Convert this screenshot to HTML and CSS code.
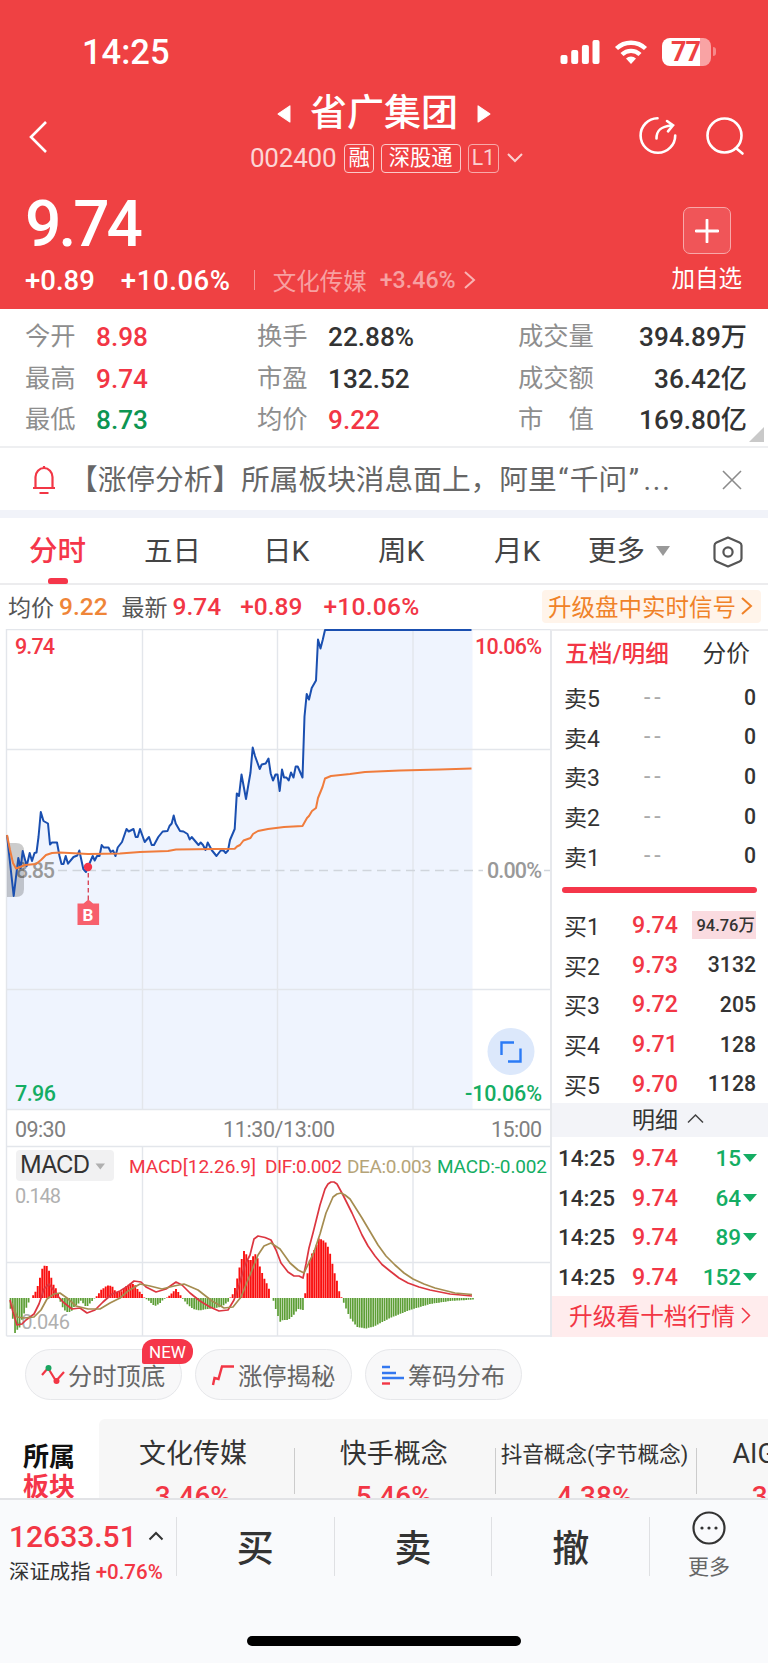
FILE: index.html
```html
<!DOCTYPE html>
<html lang="zh-CN">
<head>
  <meta charset="UTF-8">
  <meta name="viewport" content="width=device-width, initial-scale=1.0">
  <title>省广集团 002400</title>
  <link rel="stylesheet" href="styles.css">
</head>
<body>
<div class="page">

  <header class="header">
    <div class="status-bar">
      <span class="time num">14:25</span>
      <div class="status-icons">
        <svg width="40" height="26" viewBox="0 0 40 26" fill="#fff">
          <rect x="0.500" y="16" width="7" height="9" rx="2"/>
          <rect x="11.200" y="11" width="7" height="14" rx="2"/>
          <rect x="21.900" y="6" width="7" height="19" rx="2"/>
          <rect x="32.500" y="1" width="7" height="24" rx="2"/>
        </svg>
        <svg class="wifi" width="34" height="26" viewBox="0 0 34 26">
          <path d="M2.500 9.500a21 21 0 0 1 29 0M8 15.500a13 13 0 0 1 18 0" fill="none" stroke="#fff" stroke-width="4.400"/>
          <path d="M17 25l-5-5.500a7.500 7.500 0 0 1 10 0z" fill="#fff"/>
        </svg>
        <div class="battery"><span class="num">77</span></div>
        <i class="battery-tip"></i>
      </div>
    </div>

    <div class="nav">
      <svg class="back" width="22" height="36" viewBox="0 0 22 36"><path d="M18 3L3 18l15 15" fill="none" stroke="#fff" stroke-width="2.600"/></svg>
      <div class="nav-center">
        <div class="stock-name">
          <svg width="14" height="20" viewBox="0 0 13 18"><path d="M12 1.500v15L1 9z" fill="#fff" stroke="#fff" stroke-linejoin="round"/></svg>
          <h1>省广集团</h1>
          <svg width="14" height="20" viewBox="0 0 13 18"><path d="M1 1.500v15L12 9z" fill="#fff" stroke="#fff" stroke-linejoin="round"/></svg>
        </div>
        <div class="stock-code">
          <span class="code num">002400</span>
          <span class="tag">融</span>
          <span class="tag tag-wide">深股通</span>
          <span class="tag tag-dim">L1</span>
          <svg width="18" height="12" viewBox="0 0 18 12"><path d="M2 2l7 7 7-7" fill="none" stroke="#fbd0d0" stroke-width="2"/></svg>
        </div>
      </div>
      <div class="nav-icons">
        <svg width="40" height="40" viewBox="0 0 40 40" fill="none" stroke="#fff" stroke-width="2.600" stroke-linecap="round">
          <path d="M19.500 2.200A17.300 17.300 0 1 0 37.200 19.500"/>
          <path d="M18.500 22.500c0-8 4-12 15-13M29 5l6 4.300-5 6"/>
        </svg>
        <svg width="40" height="40" viewBox="0 0 40 40" fill="none" stroke="#fff" stroke-width="2.600" stroke-linecap="round">
          <circle cx="19.500" cy="19.500" r="17"/><path d="M31.500 32.500l6 5"/>
        </svg>
      </div>
    </div>

    <div class="price-area">
      <div>
        <div class="price num">9.74</div>
        <div class="change">
          <span class="num">+0.89</span>
          <span class="num pct">+10.06%</span>
          <i class="bar"></i>
          <span class="sector-name">文化传媒</span>
          <span class="num sector-pct">+3.46%</span>
          <svg width="12" height="18" viewBox="0 0 12 18"><path d="M1 1l9 8-9 8" fill="none" stroke="#f9b3b3" stroke-width="2"/></svg>
        </div>
      </div>
      <div class="add">
        <div class="add-box"><svg width="24" height="24" viewBox="0 0 24 24"><path d="M12 1v22M1 12h22" stroke="#fff" stroke-width="2.800" stroke-linecap="round"/></svg></div>
        <span>加自选</span>
      </div>
    </div>
  </header>

  <section class="quote">
    <span class="label">今开</span><span class="num red">8.98</span><span class="label">换手</span><span class="num">22.88%</span><span class="label">成交量</span><span class="num end">394.89万</span>
    <span class="label">最高</span><span class="num red">9.74</span><span class="label">市盈</span><span class="num">132.52</span><span class="label">成交额</span><span class="num end">36.42亿</span>
    <span class="label">最低</span><span class="num dark-green">8.73</span><span class="label">均价</span><span class="num red">9.22</span><span class="label">市　值</span><span class="num end">169.80亿</span>
    <i class="corner"></i>
  </section>

  <section class="news">
    <svg width="24" height="30" viewBox="0 0 24 30" fill="none" stroke="#f23645" stroke-width="2.200">
      <path d="M1 23h22M3.500 23V12a8.500 9 0 0 1 17 0v11M12 4V1M7.500 28h9"/>
    </svg>
    <p>【涨停分析】所属板块消息面上，阿里<span class="quote-mark">“</span>千问<span class="quote-mark">”</span><span class="dots">...</span></p>
    <svg class="close" width="20" height="20" viewBox="0 0 20 20"><path d="M1 1l18 18M19 1L1 19" stroke="#8b8b8b" stroke-width="1.600"/></svg>
  </section>

  <nav class="tabs">
    <span class="tab active">分时</span>
    <span class="tab">五日</span>
    <span class="tab">日K</span>
    <span class="tab">周K</span>
    <span class="tab">月K</span>
    <span class="tab more">更多<i></i></span>
    <svg width="32" height="34" viewBox="0 0 32 34" fill="none" stroke="#555" stroke-width="2.200" stroke-linejoin="round">
      <path d="M16 2.500l11.500 5q2 1 2 3v13q0 2-2 3L16 31.500l-11.500-5q-2-1-2-3v-13q0-2 2-3z"/><circle cx="16" cy="17" r="4.600"/>
    </svg>
  </nav>

  <div class="info">
    <span>均价</span><b class="num orange">9.22</b>
    <span class="latest">最新</span><b class="num red">9.74</b>
    <b class="num red chg">+0.89</b><b class="num red chg">+10.06%</b>
    <span class="upgrade">升级盘中实时信号<svg width="12" height="18" viewBox="0 0 12 18"><path d="M1 1l9 8-9 8" fill="none" stroke="#f08228" stroke-width="2"/></svg></span>
  </div>

  <main class="main">
    <svg class="chart" width="550" height="708" viewBox="0 629 550 708">
      <path id="area" fill="#eff4fe"/>
      <g stroke="#e3e6eb" stroke-width="1.400" fill="none">
        <path d="M6.500 629.500H550M6.500 749.500H550M6.500 989.500H550M6.500 1109.500H550M6.500 1146.500H550M6.500 1262.500H550M6.500 1336H550"/>
        <path d="M6.500 629V1336M142.500 629V1109M277.500 629V1109M413 629V1109M142.500 1146V1336M277.500 1146V1336M413 1146V1336"/>
      </g>
      <path d="M58 870.500H483M544 870.500h6" stroke="#d0d5dc" stroke-width="1.500" stroke-dasharray="9 5.500"/>
      <text x="16" y="878" class="ax gray" textLength="39">8.85</text>
      <path d="M7 843h9q8 0 8 8v38q0 8-8 8H7z" fill="#000" fill-opacity=".2"/>
      <polyline id="price" fill="none" stroke="#1a4fb0" stroke-width="2" stroke-linejoin="round"/>
      <polyline id="average" fill="none" stroke="#f07c3c" stroke-width="2" stroke-linejoin="round"/>
      <circle cx="88" cy="867" r="4.200" fill="#f5364a"/>
      <path d="M88.300 873v27" stroke="#d8485a" stroke-width="1.400" stroke-dasharray="4.500 3"/>
      <path d="M77.500 903.500h6l4.800-4 4.800 4h6v21.500H77.500z" fill="#f7606d"/>
      <text x="82.500" y="920.500" class="mark">B</text>
      <text x="15" y="654" class="ax red" textLength="40">9.74</text>
      <text x="475" y="654" class="ax red" textLength="67">10.06%</text>
      <text x="487" y="878" class="ax gray" textLength="55">0.00%</text>
      <text x="15" y="1101" class="ax green" textLength="41">7.96</text>
      <text x="465" y="1101" class="ax green" textLength="77">-10.06%</text>
      <text x="15" y="1136.500" class="ax dim" textLength="51">09:30</text>
      <text x="223" y="1136.500" class="ax dim" textLength="112">11:30/13:00</text>
      <text x="491" y="1136.500" class="ax dim" textLength="51">15:00</text>
      <circle cx="511" cy="1051.500" r="23.500" fill="#dce8fb"/>
      <path d="M514 1042.500h-12.500v12.500M508 1061.500h12.500v-13" fill="none" stroke="#2b7bf6" stroke-width="2.400"/>

      <rect x="16" y="1150" width="98" height="31" rx="4" fill="#f1f1f2"/>
      <text x="20" y="1173" class="macd-btn" textLength="70">MACD</text>
      <path d="M95.500 1163.500h9.500l-4.700 6z" fill="#b0b0b0"/>
      <text x="129" y="1172.500" class="legend red" textLength="127">MACD[12.26.9]</text>
      <text x="265" y="1172.500" class="legend red" textLength="77">DIF:0.002</text>
      <text x="347" y="1172.500" class="legend tan" textLength="85">DEA:0.003</text>
      <text x="437" y="1172.500" class="legend green" textLength="110">MACD:-0.002</text>
      <text x="15" y="1202.500" class="axs" textLength="46">0.148</text>
      <text x="16" y="1328.500" class="axs" textLength="54">-0.046</text>
      <path id="barsUp" stroke="#fa0f0f" stroke-width="1.900"/>
      <path id="barsDown" stroke="#5c9e35" stroke-width="1.700"/>
      <polyline id="dif" fill="none" stroke="#dc3640" stroke-width="1.700" stroke-linejoin="round"/>
      <polyline id="dea" fill="none" stroke="#a58c50" stroke-width="1.700" stroke-linejoin="round"/>
    </svg>

    <aside class="depth">
      <div class="depth-tabs"><b>五档/明细</b><span>分价</span></div>
      <div class="level"><span>卖5</span><em>--</em><span class="num">0</span></div>
      <div class="level"><span>卖4</span><em>--</em><span class="num">0</span></div>
      <div class="level"><span>卖3</span><em>--</em><span class="num">0</span></div>
      <div class="level"><span>卖2</span><em>--</em><span class="num">0</span></div>
      <div class="level"><span>卖1</span><em>--</em><span class="num">0</span></div>
      <div class="ratio"></div>
      <div class="level"><span>买1</span><b class="num">9.74</b><span class="num hot">94.76万</span></div>
      <div class="level"><span>买2</span><b class="num">9.73</b><span class="num">3132</span></div>
      <div class="level"><span>买3</span><b class="num">9.72</b><span class="num">205</span></div>
      <div class="level"><span>买4</span><b class="num">9.71</b><span class="num">128</span></div>
      <div class="level"><span>买5</span><b class="num">9.70</b><span class="num">1128</span></div>
      <div class="detail-head">明细<svg width="17" height="11" viewBox="0 0 17 11"><path d="M1 9.500l7.500-7.500L16 9.500" fill="none" stroke="#444" stroke-width="1.500"/></svg></div>
      <div class="tick"><span class="num">14:25</span><b class="num">9.74</b><span class="num vol">15<i></i></span></div>
      <div class="tick"><span class="num">14:25</span><b class="num">9.74</b><span class="num vol">64<i></i></span></div>
      <div class="tick"><span class="num">14:25</span><b class="num">9.74</b><span class="num vol">89<i></i></span></div>
      <div class="tick"><span class="num">14:25</span><b class="num">9.74</b><span class="num vol">152<i></i></span></div>
      <div class="ten-levels">升级看十档行情<svg width="10" height="17" viewBox="0 0 10 17"><path d="M1 1l7.500 7.500L1 16" fill="none" stroke="#f23645" stroke-width="1.500"/></svg></div>
    </aside>
  </main>

  <div class="chips">
    <div class="chip">
      <svg width="24" height="22" viewBox="0 0 24 22" fill="none" stroke="#f23645" stroke-width="2.200"><path d="M1 11l6-7 8 13 8-9"/><circle cx="7.500" cy="4" r="3" fill="#1ba560" stroke="none"/><circle cx="15.500" cy="17" r="3" fill="#f23645" stroke="none"/></svg>
      分时顶底
      <span class="new">NEW</span>
    </div>
    <div class="chip">
      <svg width="24" height="22" viewBox="0 0 24 22" fill="none" stroke="#f23645" stroke-width="2.400"><path d="M2 21l1.500-7 4 1L11 2.500h12"/></svg>
      涨停揭秘
    </div>
    <div class="chip">
      <svg width="24" height="22" viewBox="0 0 24 22" fill="none" stroke="#3478f0" stroke-width="2.400"><path d="M1 3h8M1 9h14M1 14h22"/><path d="M1 19.500h8" stroke="#f23645"/></svg>
      筹码分布
    </div>
  </div>

  <section class="sectors">
    <div class="sectors-title"><span>所属</span><span class="red">板块</span></div>
    <div class="sectors-list">
      <div class="sector"><span>文化传媒</span><b class="num">3.46%</b></div>
      <div class="sector"><span>快手概念</span><b class="num">5.46%</b></div>
      <div class="sector long"><span>抖音概念(字节概念)</span><b class="num">4.38%</b></div>
      <div class="sector last"><span>AIGC概念</span><b class="num">3.18%</b></div>
    </div>
  </section>

  <footer class="bottom">
    <div class="actions">
      <div class="index">
        <div class="index-value"><b class="num">12633.51</b><svg width="16" height="10" viewBox="0 0 16 10"><path d="M1.500 8.500L8 2l6.500 6.500" fill="none" stroke="#333" stroke-width="2"/></svg></div>
        <div class="index-name">深证成指 <span class="num red">+0.76%</span></div>
      </div>
      <div class="action">买</div>
      <div class="action">卖</div>
      <div class="action">撤</div>
      <div class="action-more">
        <svg width="36" height="36" viewBox="0 0 36 36"><circle cx="18" cy="18" r="15.500" fill="none" stroke="#333" stroke-width="2.200"/><g fill="#333"><circle cx="11" cy="18" r="1.600"/><circle cx="18" cy="18" r="1.600"/><circle cx="25" cy="18" r="1.600"/></g></svg>
        <span>更多</span>
      </div>
    </div>
    <div class="home-bar"></div>
  </footer>
</div>

<script src="chart.js"></script>
</body>
</html>
```
FILE: chart.js
```js
const price = [
  [7,835],[13.7,896],[18.3,858],[20.7,868],[22.7,851],[26.7,866],[29.7,853],[32,861],[34.5,853],[36.5,852.5],
  [38.5,837],[40.8,812],[43.5,821],[48,823.5],[50,844.5],[52,842.5],[57,842.5],[59.5,856],[61.5,864],[63.5,864],
  [65.7,856],[68,863.7],[73.5,857],[77.3,855.5],[79.3,850.5],[83.3,869],[86,872],[88,867],[92.7,856],[94.7,860.5],
  [97,856],[99.5,856],[101.7,845],[103.7,847.5],[108.5,847.5],[110.7,852],[113,850.5],[115.5,856],[117.7,847.5],
  [122,842],[126.5,829],[128.7,831.5],[133.5,829],[135.7,837],[137.7,837],[140,829],[144.7,842],[149,837],
  [151.7,845],[154,845],[158.3,837],[162.7,831.5],[167.5,831],[169.5,826],[171.7,823.5],[173.7,815.5],[175.7,823.5],
  [180,831],[183.5,831.5],[187.5,834],[189.7,839.5],[191.7,837],[198.5,845],[200.7,842.5],[203,845],[205.5,850],
  [207.7,842.5],[212,850.5],[216.5,856],[220.7,850.5],[223.5,850.5],[225.7,853],[228,850.5],[230,840],[234.7,829],
  [236.8,793.5],[239,796],[241.5,774.5],[246,799],[248.5,784],[250.5,772.5],[252.7,747.5],[255,756],[259.7,769],
  [261.7,764.5],[265.7,763.5],[268.5,758.5],[270.7,773.5],[273,780.5],[275.5,774.5],[277.5,774.5],[279.7,791],
  [282,769.5],[284,777.5],[286.5,777.5],[288.7,780.5],[291,772.5],[293.5,777.5],[295.7,766.5],[297.7,766.5],
  [302.5,777.5],[304.5,716.5],[306.7,694],[309,699.5],[311.7,688],[316,680.5],[318,639.5],[320.5,648.5],
  [322.7,640],[325,630],[471.5,630]
];

const average = [
  [7,835],[10,850],[13,863],[16,868.5],[20,867],[25,865],[36,864],[41,860],[46,855],[52,853],[60,852.5],[88,854],
  [120,853.5],[140,852],[168,851],[176,849.5],[234.7,848.7],[237,846.5],[240,845],[243.5,840.5],[250.5,838],
  [253,834],[258,831],[268,829],[284,827],[302.5,826],[307,818],[309,816],[312,811],[316,808],[318,798],
  [322.5,787],[325,778.5],[331,776],[350,774],[365,772],[400,770.5],[440,769.5],[471.5,768.5]
];

// bar heights, positive above the zero line
const macd = [
  [10,-9],[12,-16],[15,-35],[17,-32],[20,-29],[22,-21],[25,-13],[28,-6],[30,-1],[32,1],[36,7],[39,16],[42,29],
  [45,33],[47,32],[50,25],[53,14],[57,8],[59,2],[60,-3],[63,-10],[66,-14],[71,-14],[74,-9],[78,-6],[81,-2.5],
  [85,-8],[88,-8],[91,-4],[94,-1],[97,2],[101,8],[107,12.5],[112,12],[116,6],[121,6],[125,11],[131,15],[135,13],
  [138,8],[143,3],[144.5,0],[148,-2],[153,-7],[156,-8],[160,-5],[164,-1],[168,1],[172,5],[176,9],[179,5],
  [183,-1],[188,-7],[193,-11],[200,-12.5],[207,-11],[215,-10],[221,-9],[228,-4],[230,0],[232,2],[236,13],
  [239,29],[241,35],[243,46],[245,48],[248,38],[252,38],[254,45],[257,42],[260,31],[264,20],[268,12],[270,6],
  [271,0],[273,-1],[276,-12],[280,-24],[283,-22],[288,-22],[293,-18],[298,-11],[303,-12],[304.5,0],[306,10],
  [308,30],[311,43],[315,49],[319,60],[324,57],[327,54],[330,45],[334,27],[337,17],[340,3],[342,0],[345,-8],
  [350,-20],[357,-29],[366,-30.5],[374,-28.5],[390,-20],[410,-12],[430,-6],[450,-3],[474,-1.5]
];

const dif = [
  [10,1300],[13,1312],[17,1325],[22,1324],[26,1320],[34,1314],[39,1304],[44,1289],[49,1284],[52,1288],[57,1295],
  [63,1302],[72,1309],[80,1308],[87,1313],[95,1310],[103,1302],[112,1294],[120,1291],[128,1286],[134,1281],
  [141,1282],[146,1287],[156,1292],[166,1289],[176,1282],[182,1285],[190,1293],[200,1301],[210,1307],[219,1311],
  [228,1310],[234,1300],[239,1285],[245,1265],[250,1255],[254,1239],[258,1236],[265,1237.5],[271,1240],
  [276,1250],[281,1263],[288,1272],[294,1276],[299,1276],[303,1278],[306,1264],[309,1248],[313,1233],[317,1217],
  [320,1205],[325,1189],[328,1184],[331,1182],[334,1182],[337,1184],[343,1195],[352,1213],[362,1235],[368,1246],
  [375,1256],[382,1264.5],[390,1271],[399,1278],[408,1283],[419,1287],[430,1290],[450,1294],[472,1296]
];

const dea = [
  [12,1303],[17,1317],[24,1318],[34,1317],[41,1310],[47,1299],[54,1294],[60,1293],[67,1298],[76,1306],[88,1309],
  [100,1309],[110,1303],[120,1298],[128,1291],[140,1284],[150,1286],[162,1289],[174,1286],[184,1284],[198,1290],
  [212,1301],[224,1308],[233,1307],[241,1297],[250,1275],[258,1255],[264,1246],[271,1243],[280,1249],[290,1263],
  [298,1270],[304,1273],[314,1252],[320,1234],[326,1213],[333,1197],[337,1194],[341,1193],[345,1195],[350,1199],
  [362,1218],[378,1245],[386,1256],[395,1265],[404,1273],[413,1279],[424,1284],[435,1288],[455,1293],[472,1294.5]
];

function setLine(id, points) {
  document.getElementById(id).setAttribute('points', points.join(' '));
}

function valueAt(points, x) {
  for (let i = 1; i < points.length; i++) {
    const [x0, y0] = points[i - 1];
    const [x1, y1] = points[i];
    if (x <= x1) return y0 + (y1 - y0) * (x - x0) / (x1 - x0);
  }
  return 0;
}

setLine('price', price);
setLine('average', average);
setLine('dif', dif);
setLine('dea', dea);
document.getElementById('area').setAttribute('d', 'M7 1109L' + price.join(' ') + ' 472.500 630 472.500 1109z');

let up = '';
let down = '';
for (let x = 10.5; x < 474; x += 2.267) {
  const h = valueAt(macd, x);
  if (h > 0) up += `M${x} 1298v${-h}`;
  else down += `M${x} 1298v${-h}`;
}
document.getElementById('barsUp').setAttribute('d', up);
document.getElementById('barsDown').setAttribute('d', down);
```
FILE: styles.css
```css
* {
  box-sizing: border-box;
}
body {
  margin: 0;
  background: #fff;
  color: #333;
  font-family: Roboto, "Noto Sans CJK SC", sans-serif;
}
svg {
  flex: none;
  display: block;
}
i, em {
  font-style: normal;
}
.page {
  width: 768px;
  height: 1663px;
  display: flex;
  flex-direction: column;
  overflow: hidden;
}
.num {
  font-family: Roboto, "Noto Sans CJK SC", sans-serif;
  font-weight: 500;
}
.red { color: #f23645; fill: #f23645; }
.green { color: #14ad63; fill: #14ad63; }
.dark-green { color: #0d9552; }
.orange { color: #ef8538; }

/* header */
.header {
  height: 309px;
  background: #ef4143;
  color: #fff;
}
.status-bar {
  height: 84px;
  padding: 19px 52px 0 82px;
  display: flex;
  align-items: center;
  justify-content: space-between;
}
.time {
  font-size: 34.500px;
}
.status-icons {
  display: flex;
  align-items: center;
}
.wifi {
  margin: 0 14px;
}
.battery {
  width: 49px;
  height: 28px;
  border-radius: 8px;
  background: linear-gradient(90deg, #fff 77%, #f9a3a4 77%);
  color: #ef4143;
  font-size: 27px;
  line-height: 28px;
  padding-left: 9px;
}
.battery .num {
  font-weight: 700;
  letter-spacing: -1px;
}
.battery-tip {
  width: 3px;
  height: 9px;
  margin-left: 2px;
  border-radius: 0 3px 3px 0;
  background: #f6898a;
}
.nav {
  height: 102px;
  padding: 0 23px 0 28px;
  display: flex;
  justify-content: space-between;
}
.back {
  margin: 35px 86px 0 0;
}
.nav-center {
  display: flex;
  flex-direction: column;
  align-items: center;
}
.stock-name {
  height: 56px;
  margin-right: 6px;
  padding-top: 3px;
  display: flex;
  align-items: center;
  gap: 19px;
}
.stock-name h1 {
  margin: 0;
  font-size: 37px;
  line-height: 56px;
  font-weight: 500;
}
.stock-code {
  display: flex;
  align-items: center;
  gap: 7px;
  margin-top: 3px;
}
.code {
  font-size: 26px;
  font-weight: 400;
  letter-spacing: -.200px;
  color: #fcd5d5;
  margin-right: 1px;
}
.tag {
  height: 29px;
  padding: 0 3px;
  border: 1.500px solid #fbc9c9;
  border-radius: 4px;
  font-size: 21.300px;
  line-height: 26px;
}
.tag-wide {
  padding: 0 7px;
}
.tag-dim {
  color: #fbd0d0;
  border-color: #f8aaaa;
  padding: 0 3px;
}
.nav-icons {
  display: flex;
  gap: 27px;
  padding-top: 32px;
}
.price-area {
  padding: 0 26px 0 25px;
  display: flex;
  justify-content: space-between;
}
.price {
  margin-top: 2px;
  height: 75px;
  font-size: 64px;
  line-height: 74px;
  letter-spacing: -3px;
}
.change {
  height: 34px;
  display: flex;
  align-items: center;
  font-size: 27.500px;
}
.change .pct {
  margin-left: 26px;
  letter-spacing: .600px;
}
.change .bar {
  width: 1px;
  height: 20px;
  background: #f59495;
  margin: 0 18px 0 23px;
}
.sector-name {
  color: #f7a0a1;
  font-size: 23.500px;
}
.change .sector-pct {
  color: #f7a0a1;
  font-size: 23.200px;
  margin: 0 8px 0 13px;
}
.add {
  display: flex;
  flex-direction: column;
  align-items: center;
  font-size: 23.500px;
  line-height: 30px;
}
.add-box {
  width: 48px;
  height: 47px;
  margin: 21px 0 10px;
  border: 1.500px solid #f8a8a9;
  border-radius: 7px;
  background: #f05558;
  display: flex;
  align-items: center;
  justify-content: center;
}

/* quote */
.quote {
  position: relative;
  height: 139px;
  padding: 8px 21px 0 25px;
  border-bottom: 2px solid #eeeff1;
  display: grid;
  grid-template-columns: 71px 161px 71px 190px 78px 1fr;
  grid-template-rows: repeat(3, 41.500px);
  line-height: 41.500px;
  font-size: 26.200px;
}
.quote .label {
  color: #8e8e8e;
  font-size: 25.300px;
  line-height: 40px;
}
.end {
  text-align: right;
}
.corner {
  position: absolute;
  right: 4px;
  bottom: 4px;
  border-left: 15px solid transparent;
  border-bottom: 15px solid #c9c9c9;
}

/* news */
.news {
  height: 70px;
  padding: 2px 26px 0 32px;
  border-bottom: 8px solid #f1f3f9;
  display: flex;
  align-items: center;
  color: #666;
}
.news p {
  margin: 0 0 0 13px;
  flex: 1;
  font-size: 28.700px;
  line-height: 40px;
  white-space: nowrap;
}
.quote-mark {
  margin: 0 1.500px;
}
.dots {
  margin-left: 3px;
  letter-spacing: 1.800px;
}

/* tabs */
.tabs {
  height: 67px;
  padding: 0 24px 0 29px;
  border-bottom: 2px solid #ececee;
  display: grid;
  grid-template-columns: 115px 119px 115px 116px 94px 1fr 32px;
  align-items: center;
  font-size: 28.500px;
  line-height: 67px;
  color: #444;
}
.active {
  position: relative;
  color: #f5364a;
  font-weight: 500;
}
.active::after {
  content: "";
  position: absolute;
  left: 19px;
  bottom: 1px;
  width: 20px;
  height: 6px;
  border-radius: 3px 3px 2px 2px;
  background: #f5364a;
}
.more i {
  display: inline-block;
  margin-left: 11px;
  border: 7.500px solid transparent;
  border-top: 10px solid #999;
  border-bottom: 0;
  vertical-align: 5px;
}

/* price info */
.info {
  height: 44px;
  padding: 0 7px 2px 8px;
  display: flex;
  align-items: center;
  font-size: 23px;
  color: #555;
}
.info .num {
  font-size: 24.500px;
  margin-left: 5px;
}
.info .latest {
  margin-left: 14px;
}
.info .chg {
  margin-left: 19px;
}
.info .chg + .chg {
  margin-left: 21px;
  letter-spacing: .300px;
}
.upgrade {
  margin-left: auto;
  height: 33px;
  padding: 0 8px 0 6px;
  background: #fff4ea;
  border-radius: 4px;
  color: #f08228;
  font-size: 23.500px;
  display: flex;
  align-items: center;
  gap: 5px;
}

/* chart */
.main {
  display: flex;
  height: 708px;
}
.chart text {
  font-family: Roboto, sans-serif;
}
.ax {
  font-size: 21.500px;
  font-weight: 500;
}
.ax.gray {
  fill: #999;
}
.ax.dim {
  fill: #808080;
  font-weight: 400;
}
.axs {
  font-size: 20px;
  fill: #b0b0b0;
}
.chart .mark {
  font-size: 17px;
  font-weight: 700;
  fill: #fff;
}
.chart .macd-btn {
  font-family: Inter, sans-serif;
  font-size: 24px;
  fill: #333;
}
.legend {
  font-size: 19px;
}
.tan {
  fill: #b5a478;
}

/* depth */
.depth {
  flex: 1;
  border-left: 2px solid #e6e8ec;
  border-top: 2px solid #ececee;
}
.depth-tabs {
  height: 46.500px;
  padding: 0 18px 4px 13px;
  display: flex;
  justify-content: space-between;
  align-items: center;
  font-size: 23.700px;
}
.depth-tabs b {
  color: #f23645;
  font-weight: 500;
}
.level, .tick {
  height: 39.600px;
  padding: 0 12px 0 12px;
  display: grid;
  grid-template-columns: 68px 60px 1fr;
  align-items: center;
  font-size: 23px;
}
.level em {
  color: #aaa;
  padding-left: 12px;
  letter-spacing: 4px;
}
.level b, .tick b {
  color: #f23645;
  font-size: 23.200px;
}
.level .num:last-child {
  text-align: right;
  font-size: 21.200px;
}
.level .num.hot:last-child {
  justify-self: end;
  font-size: 16.500px;
  width: 64px;
  height: 28px;
  line-height: 29px;
  padding-right: 1px;
  background: #fadbe0;
  white-space: nowrap;
}
.ratio {
  margin: 11.500px 11px 12.500px 10px;
  height: 6px;
  border-radius: 3px;
  background: #f5364a;
}
.detail-head {
  height: 34px;
  margin-bottom: 1px;
  padding: 0 0 4px 16px;
  background: #f3f4f8;
  display: flex;
  align-items: center;
  justify-content: center;
  gap: 9px;
  font-size: 23px;
}
.tick {
  grid-template-columns: 74px 60px 1fr;
  padding: 0 11px 0 6px;
  font-size: 22.500px;
}
.tick .vol {
  color: #14ad63;
  display: flex;
  justify-content: flex-end;
  align-items: center;
}
.vol i {
  margin-left: 2px;
  border: 7px solid transparent;
  border-top: 8px solid #14ad63;
  border-bottom: 0;
}
.ten-levels {
  height: 41px;
  margin-top: -1px;
  padding-bottom: 2px;
  background: #ffeced;
  color: #f23645;
  font-size: 23.700px;
  display: flex;
  align-items: center;
  justify-content: center;
  gap: 6px;
}

/* chips */
.chips {
  height: 82px;
  padding: 12px 25px 0;
  display: flex;
  gap: 13px;
}
.chip {
  position: relative;
  width: 157px;
  height: 51px;
  padding-left: 15px;
  border: 1px solid #e6e7ea;
  border-radius: 26px;
  background: #f8f8f9;
  display: flex;
  align-items: center;
  gap: 3px;
  font-size: 24.300px;
  color: #666;
  white-space: nowrap;
}
.new {
  position: absolute;
  left: 116px;
  top: -11px;
  width: 51px;
  height: 25px;
  border-radius: 12px 12px 12px 2px;
  background: #f5364a;
  color: #fff;
  font-size: 17px;
  line-height: 26px;
  text-align: center;
}

/* sectors */
.sectors {
  height: 79px;
  display: flex;
  overflow: hidden;
}
.sectors-title {
  width: 99px;
  padding: 23px 0 0 23px;
  flex: none;
  display: flex;
  flex-direction: column;
  font-size: 26px;
  line-height: 30px;
  font-weight: 700;
  color: #111;
}
.sectors-title .red {
  color: #f5364a;
}
.sectors-list {
  display: flex;
  background: #f7f7f7;
  border-radius: 6px 0 0 0;
}
.sector {
  width: 200.800px;
  flex: none;
  padding: 17px 13px 0 0;
  display: flex;
  flex-direction: column;
  align-items: center;
  font-size: 27px;
  line-height: 37px;
  white-space: nowrap;
  background: linear-gradient(#ccc, #ccc) 195px 29px / 1px 46px no-repeat;
}
.sector.long span {
  font-size: 21.600px;
}
.sector.last {
  width: 190px;
}
.sector b {
  margin-top: 5px;
  color: #f23645;
  font-size: 28px;
}

/* bottom */
.bottom {
  flex: 1;
  border-top: 2px solid #e2e3e6;
  background: #f9fafc;
}
.actions {
  height: 98px;
  display: flex;
  padding-top: 17px;
}
.index {
  width: 176px;
  height: 59px;
  padding-left: 9px;
  flex: none;
  white-space: nowrap;
}
.index-value {
  display: flex;
  align-items: center;
  gap: 11px;
  height: 38px;
}
.index-value b {
  color: #f23645;
  font-size: 30px;
}
.index-name {
  font-size: 20.400px;
  line-height: 34px;
}
.index-name .num {
  font-size: 20.500px;
}
.action {
  width: 157.700px;
  height: 59px;
  border-left: 1px solid #dfe0e3;
  text-align: center;
  font-size: 37px;
  line-height: 65px;
  font-weight: 500;
}
.action-more {
  flex: 1;
  height: 59px;
  border-left: 1px solid #dfe0e3;
  display: flex;
  flex-direction: column;
  align-items: center;
  font-size: 21px;
  line-height: 30px;
  color: #666;
}
.action-more svg {
  margin: -7px 0 6px;
}
.home-bar {
  width: 274px;
  height: 10px;
  margin: 38px auto 0;
  border-radius: 5px;
  background: #000;
}
```
